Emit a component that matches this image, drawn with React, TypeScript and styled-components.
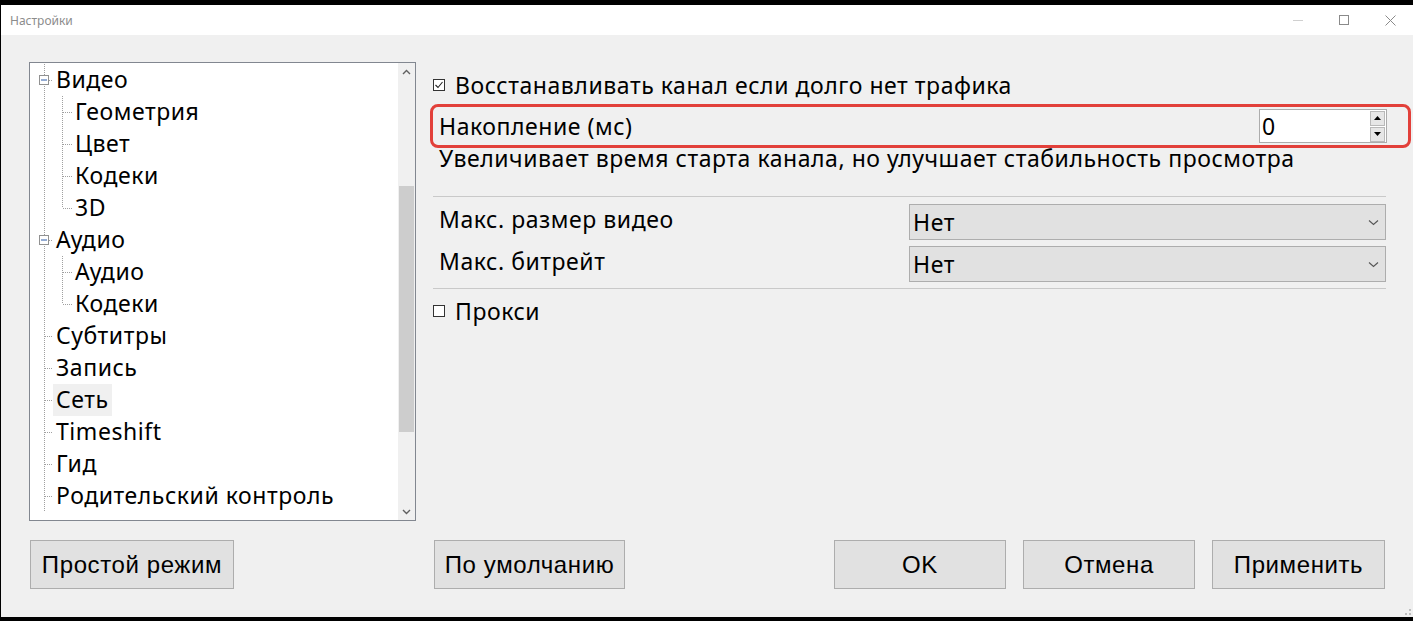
import React from "react";
import styled, { createGlobalStyle } from "styled-components";

const Global = createGlobalStyle`
  html, body { margin: 0; padding: 0; background: #000; }
  body { width: 1413px; height: 621px; overflow: hidden; }
  * { box-sizing: border-box; }
`;

const UI = `"Noto Sans", "Open Sans", sans-serif`;
const BTN = `"Liberation Sans", Arial, sans-serif`;

const Window = styled.div`
  margin-top: 5px;
  width: 1413px;
  height: 612px;
  border-left: 1px solid #000;
  display: flex;
  flex-direction: column;
  font-family: ${UI};
  color: #000;
`;

const TitleBar = styled.div`
  height: 30px;
  background: #fff;
  display: flex;
  align-items: center;
  padding-left: 9px;
`;

const Title = styled.div`
  flex: 1;
  font-size: 12px;
  color: #8c8c8c;
`;

const Controls = styled.div`
  display: flex;
  align-items: center;
  height: 100%;
`;

const CtrlBtn = styled.div`
  width: 46px;
  height: 100%;
  display: flex;
  align-items: center;
  justify-content: center;
`;

const Body = styled.div`
  flex: 1;
  background: #f0f0f0;
  display: flex;
  flex-direction: column;
  padding-top: 27px;
  font-size: 23px;
  letter-spacing: 0.55px;
`;

const Main = styled.div`
  display: flex;
  height: 459px;
  padding-left: 28px;
`;

const TreeBox = styled.div`
  width: 387px;
  height: 459px;
  border: 1px solid #828790;
  background: #fff;
  display: flex;
`;

const TreeList = styled.div`
  flex: 1;
  padding-top: 1px;
  display: flex;
  flex-direction: column;
  overflow: hidden;
`;

const TreeRowEl = styled.div`
  height: 32px;
  display: flex;
  align-items: center;
  flex-shrink: 0;
`;

const TreeLabel = styled.span<{ $selected?: boolean }>`
  line-height: 31px;
  height: 32px;
  padding: 0 3px;
  white-space: nowrap;
  background: ${(p) => (p.$selected ? "#f0f0f0" : "transparent")};
`;

const ScrollBar = styled.div`
  width: 17px;
  background: #f0f0f0;
  display: flex;
  flex-direction: column;
  align-items: center;
`;

const ScrollArrow = styled.div`
  height: 17px;
  width: 17px;
  display: flex;
  align-items: center;
  justify-content: center;
`;

const Track = styled.div`
  flex: 1;
  width: 100%;
  display: flex;
  flex-direction: column;
  padding-top: 106px;
`;

const Thumb = styled.div`
  width: 15px;
  margin-left: 1px;
  height: 246px;
  background: #cdcdcd;
`;

const Right = styled.div`
  width: 981px;
  margin-left: 14px;
  display: flex;
  flex-direction: column;
  padding-top: 8px;
`;

const CheckRow = styled.div<{ $mt?: number }>`
  height: 30px;
  display: flex;
  align-items: center;
  padding-left: 3px;
  margin-top: ${(p) => p.$mt ?? 0}px;
  line-height: 29px;
`;

const Box = styled.span`
  width: 12px;
  height: 12px;
  border: 1px solid #333;
  background: #fff;
  margin-right: 10px;
  display: inline-flex;
  align-items: center;
  justify-content: center;
`;

const FieldRow = styled.div`
  position: relative;
  height: 44px;
  margin-top: 4px;
  display: flex;
  align-items: center;
  padding-left: 9px;
  padding-right: 24px;
`;

const Highlight = styled.div`
  position: absolute;
  left: 0;
  top: 0;
  width: 981px;
  height: 44px;
  border: 3px solid #e2403a;
  border-radius: 8px;
  pointer-events: none;
`;

const Grow = styled.span`
  flex: 1;
`;

const Spin = styled.div`
  width: 128px;
  height: 34px;
  border: 1px solid #acacac;
  background: #fff;
  display: flex;
  align-items: center;
  padding-left: 2px;
`;

const SpinButtons = styled.div`
  display: flex;
  flex-direction: column;
  gap: 1px;
  margin-right: 1px;
`;

const SpinBtn = styled.div`
  width: 15px;
  height: 15px;
  background: #e6e6e6;
  border: 1px solid #b9b9b9;
  display: flex;
  align-items: center;
  justify-content: center;
`;

const Desc = styled.div`
  height: 22px;
  line-height: 20px;
  padding-left: 9px;
  white-space: nowrap;
`;

const Sep = styled.div<{ $mt: number }>`
  height: 1px;
  margin-left: 3px;
  width: 953px;
  background: #c9c9c9;
  margin-top: ${(p) => p.$mt}px;
`;

const ComboRow = styled.div<{ $mt: number }>`
  height: 36px;
  margin-top: ${(p) => p.$mt}px;
  display: flex;
  align-items: center;
  padding-left: 9px;
`;

const ComboLabel = styled.span`
  width: 470px;
  margin-bottom: 7px;
`;

const Combo = styled.div`
  width: 477px;
  height: 36px;
  background: #e1e1e1;
  border: 1px solid #adadad;
  display: flex;
  align-items: center;
  padding-left: 3px;
  padding-right: 6px;
`;

const BottomBar = styled.div`
  display: flex;
  margin-top: 19px;
  padding-left: 29px;
  padding-right: 28px;
`;

const Button = styled.div<{ $w: number; $ml?: number }>`
  width: ${(p) => p.$w}px;
  height: 49px;
  margin-left: ${(p) => p.$ml ?? 0}px;
  background: #e1e1e1;
  border: 1px solid #adadad;
  display: flex;
  align-items: center;
  justify-content: center;
  font-family: ${BTN};
  font-size: 24px;
  letter-spacing: 0.6px;
  color: #000;
`;

const Spacer = styled.div`
  flex: 1;
`;

const Grip = styled.div`
  height: 28px;
  display: flex;
  justify-content: flex-end;
  align-items: flex-end;
  padding: 0 1px 1px 0;
`;

const dot = { stroke: "#a0a0a0", strokeWidth: 1, strokeDasharray: "1 1" };

type Node = {
  label: string;
  level: 0 | 1;
  expander?: boolean;
  last?: boolean;
  selected?: boolean;
};

const nodes: Node[] = [
  { label: "Видео", level: 0, expander: true },
  { label: "Геометрия", level: 1 },
  { label: "Цвет", level: 1 },
  { label: "Кодеки", level: 1 },
  { label: "3D", level: 1, last: true },
  { label: "Аудио", level: 0, expander: true },
  { label: "Аудио", level: 1 },
  { label: "Кодеки", level: 1, last: true },
  { label: "Субтитры", level: 0 },
  { label: "Запись", level: 0 },
  { label: "Сеть", level: 0, selected: true },
  { label: "Timeshift", level: 0 },
  { label: "Гид", level: 0 },
  { label: "Родительский контроль", level: 0 },
];

function Connector({ n }: { n: Node }) {
  const w = n.level === 0 ? 23 : 42;
  return (
    <svg width={w} height={32} style={{ flexShrink: 0 }}>
      <line x1={14.5} y1={0} x2={14.5} y2={32} {...dot} />
      {n.level === 0 && <line x1={15} y1={16.5} x2={23} y2={16.5} {...dot} />}
      {n.level === 1 && (
        <>
          <line x1={32.5} y1={0} x2={32.5} y2={n.last ? 16 : 32} {...dot} />
          <line x1={33} y1={16.5} x2={42} y2={16.5} {...dot} />
        </>
      )}
      {n.expander && (
        <>
          <rect x={9.5} y={11.5} width={9} height={9} fill="#fff" stroke="#919191" />
          <line x1={11} y1={16} x2={17} y2={16} stroke="#2d5ba8" strokeWidth={1} />
        </>
      )}
    </svg>
  );
}

function Check({ checked }: { checked?: boolean }) {
  return (
    <Box>
      {checked && (
        <svg width="10" height="10" viewBox="0 0 10 10">
          <path d="M1.5 5 L4 7.5 L8.5 2" fill="none" stroke="#222" strokeWidth="1.1" />
        </svg>
      )}
    </Box>
  );
}

const Chevron = () => (
  <svg width="11" height="7" viewBox="0 0 11 7">
    <path d="M1 1.5 L5.5 5.5 L10 1.5" fill="none" stroke="#555" strokeWidth="1.1" />
  </svg>
);

export default function App() {
  return (
    <>
      <Global />
      <Window>
        <TitleBar>
          <Title>Настройки</Title>
          <Controls>
            <CtrlBtn>
              <svg width="10" height="10">
                <line x1="0" y1="5.5" x2="10" y2="5.5" stroke="#d0d0d0" />
              </svg>
            </CtrlBtn>
            <CtrlBtn>
              <svg width="10" height="10">
                <rect x="0.5" y="0.5" width="9" height="9" fill="none" stroke="#8a8a8a" />
              </svg>
            </CtrlBtn>
            <CtrlBtn>
              <svg width="11" height="11">
                <path d="M0.5 0.5 L10.5 10.5 M10.5 0.5 L0.5 10.5" stroke="#8a8a8a" />
              </svg>
            </CtrlBtn>
          </Controls>
        </TitleBar>
        <Body>
          <Main>
            <TreeBox>
              <TreeList>
                {nodes.map((n, i) => (
                  <TreeRowEl key={i}>
                    <Connector n={n} />
                    <TreeLabel $selected={n.selected}>{n.label}</TreeLabel>
                  </TreeRowEl>
                ))}
              </TreeList>
              <ScrollBar>
                <ScrollArrow>
                  <svg width="9" height="6" viewBox="0 0 9 6">
                    <path d="M1 5 L4.5 1.5 L8 5" fill="none" stroke="#606060" strokeWidth="1.4" />
                  </svg>
                </ScrollArrow>
                <Track>
                  <Thumb />
                </Track>
                <ScrollArrow>
                  <svg width="9" height="6" viewBox="0 0 9 6">
                    <path d="M1 1 L4.5 4.5 L8 1" fill="none" stroke="#606060" strokeWidth="1.4" />
                  </svg>
                </ScrollArrow>
              </ScrollBar>
            </TreeBox>
            <Right>
              <CheckRow>
                <Check checked />
                Восстанавливать канал если долго нет трафика
              </CheckRow>
              <FieldRow>
                <Grow>Накопление (мс)</Grow>
                <Spin>
                  <Grow>0</Grow>
                  <SpinButtons>
                    <SpinBtn>
                      <svg width="7" height="4"><path d="M0 4 L3.5 0 L7 4 Z" fill="#000" /></svg>
                    </SpinBtn>
                    <SpinBtn>
                      <svg width="7" height="4"><path d="M0 0 L3.5 4 L7 0 Z" fill="#000" /></svg>
                    </SpinBtn>
                  </SpinButtons>
                </Spin>
                <Highlight />
              </FieldRow>
              <Desc>Увеличивает время старта канала, но улучшает стабильность просмотра</Desc>
              <Sep $mt={26} />
              <ComboRow $mt={7}>
                <ComboLabel>Макс. размер видео</ComboLabel>
                <Combo>
                  <Grow>Нет</Grow>
                  <Chevron />
                </Combo>
              </ComboRow>
              <ComboRow $mt={6}>
                <ComboLabel>Макс. битрейт</ComboLabel>
                <Combo>
                  <Grow>Нет</Grow>
                  <Chevron />
                </Combo>
              </ComboRow>
              <Sep $mt={6} />
              <CheckRow $mt={7}>
                <Check />
                Прокси
              </CheckRow>
            </Right>
          </Main>
          <BottomBar>
            <Button $w={204}>Простой режим</Button>
            <Button $w={191} $ml={200}>По умолчанию</Button>
            <Spacer />
            <Button $w={172}>OK</Button>
            <Button $w={172} $ml={17}>Отмена</Button>
            <Button $w={173} $ml={17}>Применить</Button>
          </BottomBar>
          <Spacer />
          <Grip>
            <svg width="7" height="7">
              <rect x="4" y="0" width="2" height="2" fill="#bdbdbd" />
              <rect x="0" y="4" width="2" height="2" fill="#bdbdbd" />
              <rect x="4" y="4" width="2" height="2" fill="#bdbdbd" />
            </svg>
          </Grip>
        </Body>
      </Window>
    </>
  );
}
